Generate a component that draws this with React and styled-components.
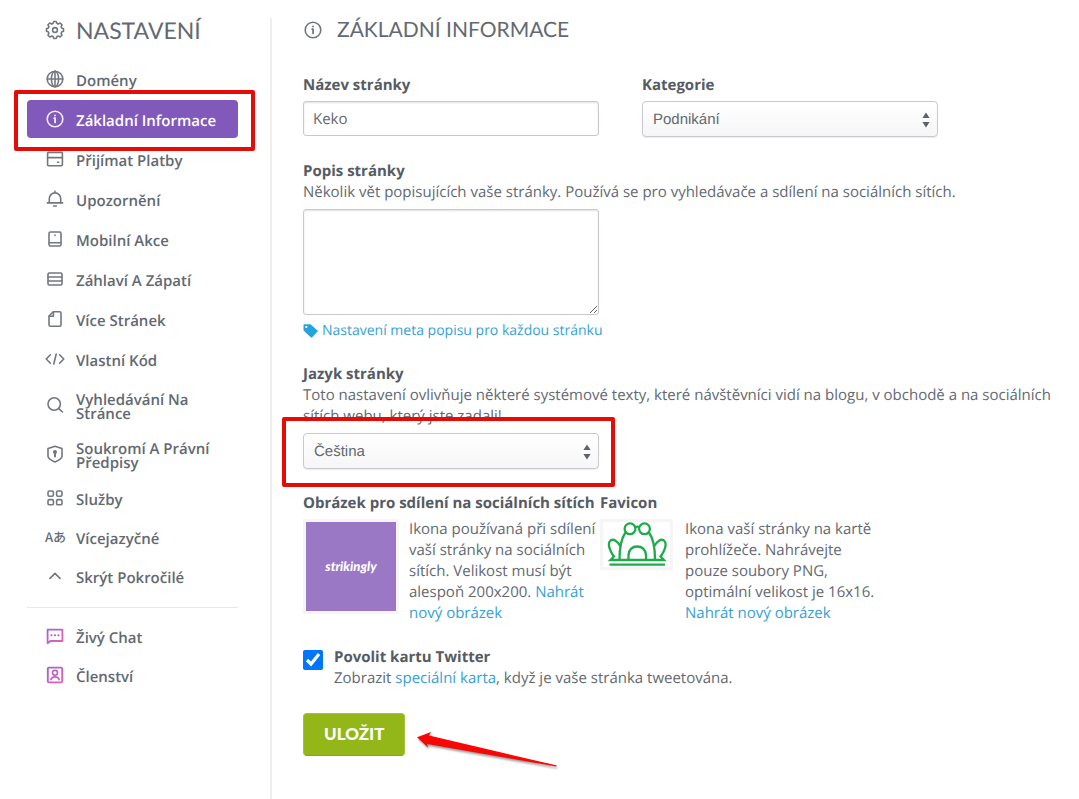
import React from 'react';
import styled, { createGlobalStyle } from 'styled-components';

const GlobalStyle = createGlobalStyle`
  * {
    box-sizing: border-box;
  }
  body {
    margin: 0;
    background: #fff;
    color: #636972;
    font-family: 'Open Sans', 'Noto Sans', sans-serif;
    font-size: 15px;
    line-height: 21px;
    text-rendering: geometricPrecision;
  }
`;

const Page = styled.div`
  display: flex;
  min-height: 100vh;
  padding-top: 18px;
`;

const Sidebar = styled.aside`
  flex: none;
  width: 272px;
  padding: 0 32px 24px 27px;
  border-right: 2px solid #eee;
`;

const SidebarTitle = styled.h2`
  display: flex;
  align-items: center;
  gap: 11px;
  margin: 0 0 18px;
  padding-left: 18px;
  font-family: Lato, sans-serif;
  font-size: 23px;
  font-weight: 400;
  line-height: 24px;
`;

const NavList = styled.ul`
  display: flex;
  flex-direction: column;
  gap: ${props => props.$gap}px;
  margin: 0 0 3px;
  padding: 0;
  list-style: none;
`;

const NavItem = styled.li`
  position: relative;
`;

const NavLink = styled.a`
  display: flex;
  align-items: center;
  gap: 11px;
  min-height: 38px;
  padding: 0 10px 0 18px;
  border-radius: 4px;
  background: ${props => (props.$active ? '#8159bb' : 'transparent')};
  color: ${props => (props.$active ? '#fff' : '#636972')};
  font-weight: 600;
  line-height: 14px;
  text-decoration: none;
`;

const NavText = styled.span`
  padding: 12px 0 8px;
`;

const Divider = styled.hr`
  margin: 12px 0 9px;
  border: 0;
  border-top: 1px solid #e8e8e8;
`;

const Svg = styled.svg`
  flex: none;
  fill: none;
  stroke: currentColor;
  stroke-width: 1.6;
  stroke-linecap: round;
  stroke-linejoin: round;
  opacity: 0.9;
`;

/* red marker drawn over the thing it points out */
const Highlight = styled.span`
  position: absolute;
  z-index: 2;
  top: ${props => props.$top}px;
  right: ${props => props.$right}px;
  bottom: ${props => props.$bottom}px;
  left: ${props => props.$left}px;
  border: 4px solid #e60c05;
  border-radius: 2px;
  pointer-events: none;
`;

const Main = styled.main`
  flex: 1;
  min-width: 0;
  padding: 0 0 24px 31px;
`;

const Title = styled.h1`
  display: flex;
  align-items: center;
  gap: 14px;
  margin: 0 0 33px;
  font-family: Lato, sans-serif;
  font-size: 21px;
  font-weight: 400;
  line-height: 24px;
`;

const FieldRow = styled.div`
  display: flex;
  flex-wrap: wrap;
  column-gap: 43px;
`;

const Field = styled.div`
  margin-bottom: ${props => props.$space || 24}px;
`;

const Label = styled.label`
  display: block;
  color: #555b64;
  font-weight: 700;
`;

const Hint = styled.p`
  margin: 0 0 6px;
`;

const Input = styled.input`
  display: block;
  width: 296px;
  height: 35px;
  margin-top: 5px;
  padding: 0 9px;
  border: 1px solid #c6c9cd;
  border-radius: 3px;
  box-shadow: inset 0 1px 2px rgba(0, 0, 0, 0.12);
  color: #636972;
  font: inherit;
  text-rendering: inherit;
`;

const TextArea = styled.textarea`
  display: block;
  width: 296px;
  height: 106px;
  padding: 8px 9px;
  border: 1px solid #c6c9cd;
  border-radius: 3px;
  box-shadow: inset 0 1px 2px rgba(0, 0, 0, 0.12);
  color: #636972;
  font: inherit;
`;

const SelectBox = styled.div`
  position: relative;
  width: 296px;
  margin-top: ${props => props.$space || 0}px;
`;

const Select = styled.select`
  display: block;
  width: 100%;
  height: 36px;
  padding: 0 30px 0 10px;
  appearance: none;
  border: 1px solid #c6c9cd;
  border-radius: 4px;
  background: linear-gradient(#fff, #f6f6f6);
  box-shadow: 0 1px 1px rgba(0, 0, 0, 0.08);
  color: #636972;
  font-family: 'Liberation Sans', Arial, sans-serif;
  font-size: 15px;
  text-rendering: inherit;
`;

const SelectArrows = styled.svg`
  position: absolute;
  top: 11px;
  right: 8px;
  fill: #5d626a;
  pointer-events: none;
`;

const Link = styled.a`
  color: #36a1d6;
  text-decoration: none;
`;

const MetaLink = styled(Link)`
  display: inline-flex;
  align-items: center;
  gap: 4px;
  margin-top: 5px;
  font-size: 14px;
`;

const Uploads = styled.div`
  display: flex;
  flex-wrap: wrap;
  margin-bottom: 23px;
`;

const Upload = styled.section`
  width: 297px;
`;

const UploadTitle = styled.h3`
  margin: 0 0 5px;
  color: #555b64;
  font-size: 15px;
  font-weight: 700;
  line-height: 21px;
  white-space: nowrap;
`;

const UploadBody = styled.div`
  display: flex;
  align-items: flex-start;
  gap: ${props => props.$gap}px;
`;

const UploadText = styled.p`
  flex: 1;
  max-width: 190px;
  margin: 0;
`;

const SharePreview = styled.div`
  display: flex;
  align-items: center;
  justify-content: center;
  width: 96px;
  height: 95px;
  border: 3px solid #f5f5f5;
  background: #9a78c5;
  color: #fff;
  font-family: Lato, sans-serif;
  font-size: 13px;
  font-style: italic;
  font-weight: 900;
`;

const FaviconPreview = styled.div`
  display: flex;
  align-items: center;
  justify-content: center;
  width: 73px;
  height: 51px;
  border: 3px solid #f5f5f5;
`;

const CheckRow = styled.div`
  display: flex;
  align-items: flex-start;
  gap: 11px;
  margin-bottom: 24px;
`;

const Checkbox = styled.input`
  width: 20px;
  height: 20px;
  margin: 3px 0 0;
  accent-color: #0075ff;
`;

const SaveArea = styled.div`
  position: relative;
  display: inline-block;
`;

const SaveButton = styled.button`
  display: block;
  height: 43px;
  padding: 0 20px 2px;
  border: 1px solid #a3c43a;
  border-bottom-color: #86a81a;
  border-radius: 4px;
  background: #93b719;
  color: #fff;
  font-family: Lato, sans-serif;
  font-size: 17px;
  font-weight: 900;
`;

const Pointer = styled.svg`
  position: absolute;
  top: 16px;
  left: 112px;
  filter: drop-shadow(1px 2px 1px rgba(0, 0, 0, 0.4));
  pointer-events: none;
`;

const icons = {
  gear: (
    <>
      <circle cx="10" cy="10" r="2.4" />
      <path d="M8 3.4L8.8 1.5H11.2L12 3.4L13.2 3.9L15.2 3L17 4.8L16.1 6.8L16.6 8L18.5 8.8V11.2L16.6 12L16.1 13.2L17 15.2L15.2 17L13.2 16.1L12 16.6L11.2 18.5H8.8L8 16.6L6.8 16.1L4.8 17L3 15.2L3.9 13.2L3.4 12L1.5 11.2V8.8L3.4 8L3.9 6.8L3 4.8L4.8 3L6.8 3.9Z" />
    </>
  ),
  globe: (
    <>
      <circle cx="10" cy="10" r="7.8" />
      <ellipse cx="10" cy="10" rx="3.6" ry="7.8" />
      <path d="M2.2 10h15.6M10 2.2v15.6" />
    </>
  ),
  info: (
    <>
      <circle cx="10" cy="10" r="7.8" />
      <path d="M9.2 9.2h.9v4.2M10 6.3v.2" strokeWidth="1.8" />
    </>
  ),
  card: (
    <>
      <rect x="2.6" y="3.4" width="14.8" height="13.4" rx="1" />
      <path d="M2.6 8.6h14.8M12.6 13.2h1.2" />
    </>
  ),
  bell: <path d="M2.4 13.9h15.2M4.3 13.6V9.6a5.7 5.7 0 0 1 11.4 0V13.6M10 2.4v1.2M8.6 17h2.8" />,
  mobile: (
    <>
      <rect x="4" y="3" width="12" height="14" rx="1.4" />
      <path d="M4.4 13.8h11.2M10 6v.4" />
    </>
  ),
  rows: (
    <>
      <rect x="3" y="4" width="14" height="12" rx="1.2" />
      <path d="M3 8h14M3 12h14" />
    </>
  ),
  page: (
    <>
      <path d="M8.2 2.8H14.6a1.4 1.4 0 0 1 1.4 1.4V15.8a1.4 1.4 0 0 1-1.4 1.4H5.4A1.4 1.4 0 0 1 4 15.8V7Z" />
      <path d="M8.4 3v4.2H4.2" />
    </>
  ),
  code: <path d="M5.4 5.8L1.2 10l4.2 4.2M14.6 5.8l4.2 4.2-4.2 4.2M11.2 5L8.8 15" />,
  search: (
    <>
      <circle cx="9.2" cy="9" r="6.2" />
      <path d="M13.8 13.6l3.6 3.4" />
    </>
  ),
  shield: (
    <>
      <path d="M10 2.2L17 4.6V12.4Q16.4 15.4 10 18Q3.6 15.4 3 12.4V4.6Z" />
      <path d="M10 8v4.6" strokeWidth="2" />
      <circle cx="10" cy="8" r="1.2" fill="currentColor" />
    </>
  ),
  grid: (
    <>
      <rect x="3" y="3" width="5.4" height="5.2" rx="1.4" />
      <rect x="11.6" y="3" width="5.4" height="5.2" rx="1.4" />
      <rect x="3" y="11.6" width="5.4" height="5.2" rx="1.4" />
      <rect x="11.6" y="11.6" width="5.4" height="5.2" rx="1.4" />
    </>
  ),
  up: <path d="M5 12.4L10 7.4l5 5" />,
  chat: (
    <>
      <path d="M2.6 17.2V3.6H17.4V15H5.4Z" stroke="url(#pink)" strokeWidth="1.8" />
      <path d="M6.4 9.2h.2M9.9 9.2h.2M13.4 9.2h.2" stroke="#b04ec4" strokeWidth="1.9" />
    </>
  ),
  member: (
    <>
      <rect x="2.8" y="2.6" width="14.4" height="14.8" rx="1.2" stroke="url(#pink)" strokeWidth="1.9" />
      <circle cx="10" cy="7.8" r="2.5" stroke="#b04ec4" />
      <path d="M5.8 14.6Q7 11.9 10 11.9T14.2 14.6" stroke="#c94cbd" />
    </>
  )
};

const LangMark = styled.span`
  flex: none;
  width: 20px;
  font-family: 'Noto Sans CJK JP', sans-serif;
  font-size: 13px;
  font-weight: 500;
  white-space: nowrap;
`;

const Icon = ({ name }) => {
  if (name === 'lang') {
    return <LangMark aria-hidden="true">Aあ</LangMark>;
  }
  return (
    <Svg width="20" height="20" viewBox="0 0 20 20" aria-hidden="true">
      {icons[name]}
    </Svg>
  );
};

const mainItems = [
  { icon: 'globe', text: 'Domény' },
  { icon: 'info', text: 'Základní Informace', active: true },
  { icon: 'card', text: 'Přijímat Platby' },
  { icon: 'bell', text: 'Upozornění' },
  { icon: 'mobile', text: 'Mobilní Akce' },
  { icon: 'rows', text: 'Záhlaví A Zápatí' },
  { icon: 'page', text: 'Více Stránek' },
  { icon: 'code', text: 'Vlastní Kód' }
];

const advancedItems = [
  { icon: 'search', text: 'Vyhledávání Na Stránce' },
  { icon: 'shield', text: 'Soukromí A Právní Předpisy' },
  { icon: 'grid', text: 'Služby' },
  { icon: 'lang', text: 'Vícejazyčné' },
  { icon: 'up', text: 'Skrýt Pokročilé' }
];

const supportItems = [
  { icon: 'chat', text: 'Živý Chat' },
  { icon: 'member', text: 'Členství' }
];

const Nav = ({ items, gap }) => (
  <NavList $gap={gap}>
    {items.map(item => (
      <NavItem key={item.text}>
        <NavLink href="#" $active={item.active}>
          <Icon name={item.icon} />
          <NavText>{item.text}</NavText>
        </NavLink>
        {item.active && <Highlight $top={-10} $right={-17} $bottom={-13} $left={-13} />}
      </NavItem>
    ))}
  </NavList>
);

const Arrows = () => (
  <SelectArrows width="8" height="16" viewBox="0 0 8 16" aria-hidden="true">
    <path d="M4 .5l3.6 5.5H.4zM4 15.5L.4 10h7.2z" />
  </SelectArrows>
);

const Frog = () => (
  <svg width="60" height="45" viewBox="0 0 60 45" fill="none" stroke="#1faa4b" strokeWidth="2.3" aria-hidden="true">
    <circle cx="23" cy="6.8" r="5.4" />
    <circle cx="37.5" cy="6.8" r="5.4" />
    <path d="M28 5.2Q30.2 4.2 32.4 5.2" />
    <path d="M18.5 10.5Q12.500 19 12.500 37.500M42 10.500Q48 19 48 37.500" />
    <path d="M21.5 38V33Q22.5 24.5 30.2 24.5T39 33V38" />
    <path d="M13.5 24.5Q8 15.5 3.5 18.5Q-.5 22 5.5 32.5L7 34.5L3.5 38H57L53.5 34.500L55 32.500Q61 22 57 18.500Q52.500 15.500 47 24.500" />
    <path d="M2.5 42.7H58" />
  </svg>
);

class App extends React.Component {
  constructor(props) {
    super(props);
    this.state = {
      siteName: 'Keko',
      category: 'Podnikání',
      description: '',
      language: 'Čeština',
      twitterCard: true
    };
  }
  handleChange = (event) => {
    const { name, value } = event.target;
    this.setState({ [name]: value });
  }
  handleToggle = () => {
    this.setState(state => ({ twitterCard: !state.twitterCard }));
  }
  render() {
    const { siteName, category, description, language, twitterCard } = this.state;
    return (
      <>
        <GlobalStyle />
        <Page>
          <Sidebar>
            <SidebarTitle>
              <Icon name="gear" />
              NASTAVENÍ
            </SidebarTitle>
            <nav>
              <Nav items={mainItems} gap={2} />
              <Nav items={advancedItems} gap={1} />
              <Divider />
              <Nav items={supportItems} gap={1} />
            </nav>
            <svg width="0" height="0" aria-hidden="true">
              <linearGradient id="pink" x1="0" y1="0" x2="1" y2="1">
                <stop offset="0" stopColor="#8e55cf" />
                <stop offset="1" stopColor="#f04fa8" />
              </linearGradient>
            </svg>
          </Sidebar>
          <Main>
            <Title>
              <Icon name="info" />
              ZÁKLADNÍ INFORMACE
            </Title>
            <FieldRow>
              <Field>
                <Label htmlFor="siteName">Název stránky</Label>
                <Input type="text" id="siteName" name="siteName" value={siteName} onChange={this.handleChange} />
              </Field>
              <Field>
                <Label htmlFor="category">Kategorie</Label>
                <SelectBox $space={5}>
                  <Select id="category" name="category" value={category} onChange={this.handleChange}>
                    <option>Podnikání</option>
                  </Select>
                  <Arrows />
                </SelectBox>
              </Field>
            </FieldRow>
            <Field $space={20}>
              <Label htmlFor="description">Popis stránky</Label>
              <Hint>Několik vět popisujících vaše stránky. Používá se pro vyhledávače a sdílení na sociálních sítích.</Hint>
              <TextArea id="description" name="description" value={description} onChange={this.handleChange} />
              <MetaLink href="#">
                <svg width="15" height="15" viewBox="0 0 15 15" aria-hidden="true">
                  <path fill="#27a3dc" fillRule="evenodd" d="M1 1.2H7.5L15 8L9 14.5H8L.5 7.5V2ZM3.3 2.8a1.1 1.1 0 1 0 .01 0Z" />
                </svg>
                Nastavení meta popisu pro každou stránku
              </MetaLink>
            </Field>
            <Field>
              <Label htmlFor="language">Jazyk stránky</Label>
              <Hint>
                Toto nastavení ovlivňuje některé systémové texty, které návštěvníci vidí na blogu, v obchodě a na sociálních sítích webu, který jste zadali!
              </Hint>
              <SelectBox>
                <Select id="language" name="language" value={language} onChange={this.handleChange}>
                  <option>Čeština</option>
                </Select>
                <Arrows />
                <Highlight $top={-16} $right={-16} $bottom={-18} $left={-21} />
              </SelectBox>
            </Field>
            <Uploads>
              <Upload>
                <UploadTitle>Obrázek pro sdílení na sociálních sítích</UploadTitle>
                <UploadBody $gap={10}>
                  <SharePreview>strikingly</SharePreview>
                  <UploadText>
                    Ikona používaná při sdílení vaší stránky na sociálních sítích. Velikost musí být alespoň 200x200. <Link href="#">Nahrát nový obrázek</Link>
                  </UploadText>
                </UploadBody>
              </Upload>
              <Upload>
                <UploadTitle>Favicon</UploadTitle>
                <UploadBody $gap={12}>
                  <FaviconPreview>
                    <Frog />
                  </FaviconPreview>
                  <UploadText>
                    Ikona vaší stránky na kartě prohlížeče. Nahrávejte pouze soubory PNG, optimální velikost je 16x16. <Link href="#">Nahrát nový obrázek</Link>
                  </UploadText>
                </UploadBody>
              </Upload>
            </Uploads>
            <CheckRow>
              <Checkbox type="checkbox" id="twitterCard" checked={twitterCard} onChange={this.handleToggle} />
              <div>
                <Label htmlFor="twitterCard">Povolit kartu Twitter</Label>
                Zobrazit <Link href="#">speciální karta</Link>, když je vaše stránka tweetována.
              </div>
            </CheckRow>
            <SaveArea>
              <SaveButton type="button">ULOŽIT</SaveButton>
              <Pointer width="146" height="40" viewBox="0 0 146 40" aria-hidden="true">
                <path fill="#f90606" d="M2 8.3L16 3L14 6.5L142 36.6L141 37.6L12 15L13 18.6Z" />
              </Pointer>
            </SaveArea>
          </Main>
        </Page>
      </>
    );
  }
}

export default App;
